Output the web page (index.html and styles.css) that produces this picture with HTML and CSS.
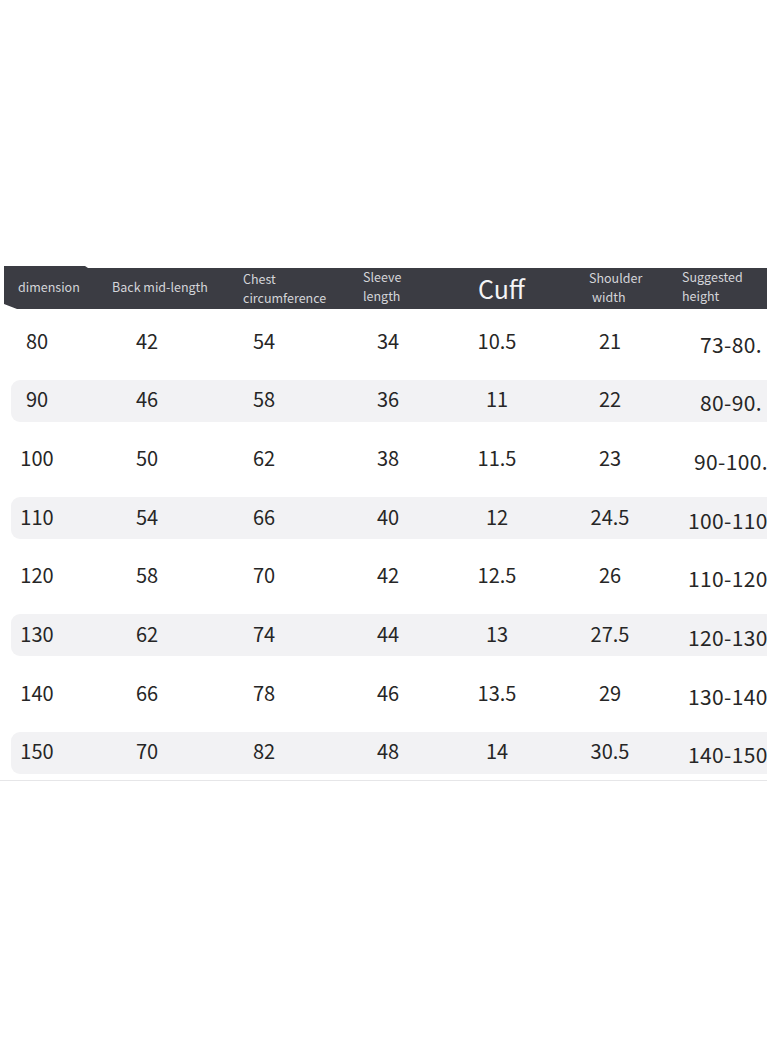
FILE: index.html
```html
<!DOCTYPE html>
<html>
<head>
<meta charset="utf-8">
<link rel="stylesheet" href="styles.css">
</head>
<body>
<div class="page">
  <div class="head">
    <div class="h h1">dimension</div>
    <div class="h h2">Back mid-length</div>
    <div class="h h3">Chest<br>circumference</div>
    <div class="h h4">Sleeve<br>length</div>
    <div class="h h5">Cuff</div>
    <div class="h h6">Shoulder<br><span class="ind">width</span></div>
    <div class="h h7">Suggested<br>height</div>
  </div>
  <div class="rows">
    <div class="row"><span>80</span><span>42</span><span>54</span><span>34</span><span>10.5</span><span>21</span><span class="last">73-80.</span></div>
    <div class="row alt"><span>90</span><span>46</span><span>58</span><span>36</span><span>11</span><span>22</span><span class="last">80-90.</span></div>
    <div class="row"><span>100</span><span>50</span><span>62</span><span>38</span><span>11.5</span><span>23</span><span class="last">90-100.</span></div>
    <div class="row alt"><span>110</span><span>54</span><span>66</span><span>40</span><span>12</span><span>24.5</span><span class="last">100-110.</span></div>
    <div class="row"><span>120</span><span>58</span><span>70</span><span>42</span><span>12.5</span><span>26</span><span class="last">110-120.</span></div>
    <div class="row alt"><span>130</span><span>62</span><span>74</span><span>44</span><span>13</span><span>27.5</span><span class="last">120-130.</span></div>
    <div class="row"><span>140</span><span>66</span><span>78</span><span>46</span><span>13.5</span><span>29</span><span class="last">130-140.</span></div>
    <div class="row alt"><span>150</span><span>70</span><span>82</span><span>48</span><span>14</span><span>30.5</span><span class="last">140-150.</span></div>
  </div>
  <div class="rule"></div>
</div>
</body>
</html>
```

FILE: styles.css
```css
html, body {
  margin: 0;
  padding: 0;
  background: #ffffff;
}
body {
  width: 767px;
  height: 1051px;
  overflow: hidden;
  font-family: "Noto Sans CJK SC", "Noto Sans", sans-serif;
}
.page {
  padding-top: 266px;
}
.head {
  margin-left: 4px;
  height: 43px;
  background: #3b3c43;
  clip-path: polygon(0 0, 81px 0, 84px 2px, 100% 2px, 100% 100%, 13px 100%, 0 calc(100% - 5px));
  display: grid;
  grid-template-columns: 94px 131px 120px 115px 111px 93px 1fr;
  padding-left: 14px;
  align-items: center;
  color: #d4d5d9;
  font-size: 12.5px;
  line-height: 19px;
  white-space: nowrap;
}
.h1 { margin-top: -2px; }
.h2 { margin-top: -2px; }
.h3 { margin-top: 1px; }
.h4 { margin-top: -4px; }
.h5 {
  font-size: 25px;
  line-height: 30px;
  color: #f4f4f6;
  margin-top: 1px;
}
.h6 { margin-top: -1px; }
.h6 .ind { padding-left: 3px; }
.h7 { margin-top: -4px; }
.rows {
  margin-top: 12px;
  display: flex;
  flex-direction: column;
  gap: 16.7px;
}
.row {
  margin-left: 11px;
  height: 42px;
  display: grid;
  grid-template-columns: 52px 168px 66px 182px 36px 190px 52px;
  align-items: center;
  border-radius: 9px 0 0 9px;
  color: #262626;
  font-size: 20px;
  line-height: 24px;
  white-space: nowrap;
}
.row span {
  display: flex;
  justify-content: center;
  margin-top: -3px;
}
.row span.last {
  font-size: 21px;
  letter-spacing: 0.4px;
  margin-top: 3px;
}
.alt {
  background: #f2f2f4;
}
.rule {
  margin-top: 6px;
  height: 1px;
  background: #e6e6e8;
}
```
